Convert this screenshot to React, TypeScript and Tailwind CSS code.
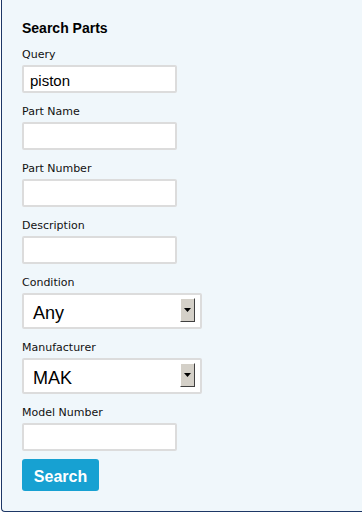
import React from 'react';

const label = "block text-[11px] leading-[14px] mb-[3px] text-[#111] font-['DejaVu_Sans',sans-serif]";
const input =
  "block w-[155px] h-[28px] pl-[6px] pt-[2px] bg-white border-2 border-[#dcdcdc] rounded-[2px] text-[15px] text-black font-['Liberation_Sans',Arial,sans-serif] outline-none";

function Field({ name, value = '' }: { name: string; value?: string }) {
  return (
    <div className="mt-[12px]">
      <label className={label}>{name}</label>
      <input className={input} value={value} readOnly />
    </div>
  );
}

function Select({ name, value }: { name: string; value: string }) {
  return (
    <div className="mt-[12px]">
      <label className={label}>{name}</label>
      <div className="relative w-[180px] h-[36px] bg-white border-2 border-[#dcdcdc] rounded-[2px]">
        <div className="pl-[9px] h-[32px] leading-[36px] text-[18px] text-black font-['Liberation_Sans',Arial,sans-serif]">{value}</div>
        {/* classic windows dropdown button */}
        <div className="absolute right-[5px] top-[3px] w-[15px] h-[24px] bg-[#d4d0c8] border-t border-l border-t-white border-l-white border-r border-b border-r-[#404040] border-b-[#404040] flex items-center justify-center">
          <svg width="7" height="4" viewBox="0 0 7 4">
            <path d="M0 0h7L3.5 4z" fill="#000" />
          </svg>
        </div>
      </div>
    </div>
  );
}

export default function App() {
  return (
    <div className="w-[362px] h-[514px] bg-white overflow-hidden">
      <div className="ml-px w-[400px] bg-[#f0f7fb] border-l border-b border-[#1d3766] rounded-bl-[4px] pl-[20px] pt-[20px] pb-[20px]">
        <h2 className="text-[14px] leading-[16px] font-bold text-black font-['Liberation_Sans',Arial,sans-serif] mb-[2px]">
          Search Parts
        </h2>
        <Field name="Query" value="piston" />
        <Field name="Part Name" />
        <Field name="Part Number" />
        <Field name="Description" />
        <Select name="Condition" value="Any" />
        <Select name="Manufacturer" value="MAK" />
        <Field name="Model Number" />
        <button className="mt-[8px] h-[32px] w-[77px] pt-[3px] bg-[#17a1d2] rounded-[3px] text-white text-[16px] font-bold font-['Liberation_Sans',Arial,sans-serif]">
          Search
        </button>
      </div>
    </div>
  );
}
